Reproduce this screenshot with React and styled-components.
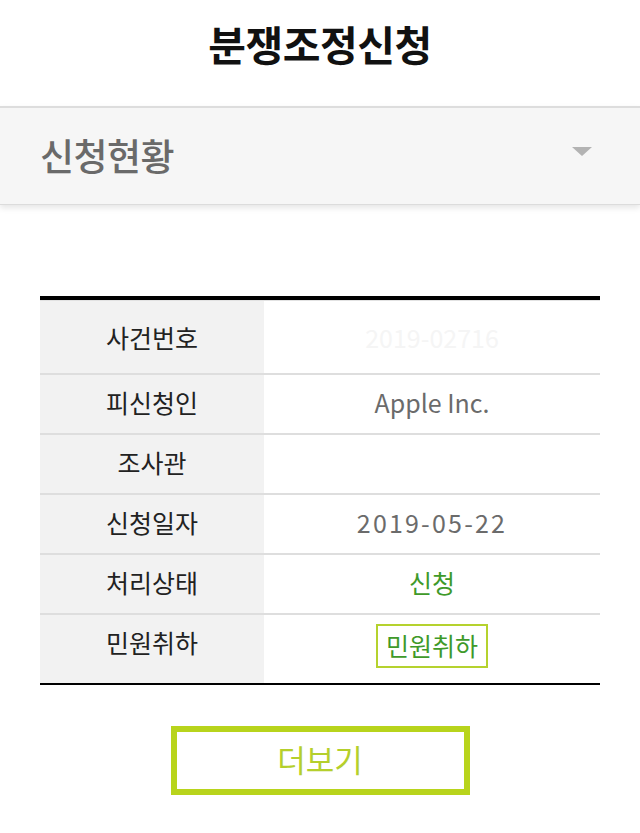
import React from "react";
import styled, { createGlobalStyle } from "styled-components";

const GlobalStyle = createGlobalStyle`
  html, body {
    margin: 0;
    padding: 0;
    background: #ffffff;
  }
  body {
    font-family: "Noto Sans CJK KR", "Noto Sans", sans-serif;
  }
`;

const Page = styled.div`
  width: 640px;
  min-height: 833px;
  background: #ffffff;
  display: flex;
  flex-direction: column;
`;

const Title = styled.h1`
  margin: 0;
  height: 106px;
  display: flex;
  align-items: center;
  justify-content: center;
  font-size: 41px;
  font-weight: 700;
  color: #111111;
  letter-spacing: -0.5px;
  padding-bottom: 20px;
  box-sizing: border-box;
`;

const StatusBar = styled.div`
  height: 99px;
  box-sizing: border-box;
  background: #f6f6f6;
  border-top: 2px solid #dddddd;
  border-bottom: 1px solid #dcdcdc;
  box-shadow: 0 3px 6px rgba(0, 0, 0, 0.1);
  display: flex;
  align-items: center;
  justify-content: space-between;
  padding: 0 48px 2px 40px;
`;

const StatusLabel = styled.span`
  font-size: 37px;
  font-weight: 500;
  color: #6a6a6a;
  letter-spacing: -0.5px;
`;

const Caret = styled.span`
  width: 0;
  height: 0;
  border-left: 10px solid transparent;
  border-right: 10px solid transparent;
  border-top: 9px solid #b3b3b3;
  margin-bottom: 8px;
`;

const Content = styled.div`
  padding: 91px 40px 0;
  display: flex;
  flex-direction: column;
  align-items: center;
`;

const Table = styled.div`
  width: 100%;
  border-top: 4px solid #000000;
  border-bottom: 2px solid #000000;
`;

const Row = styled.div`
  display: grid;
  grid-template-columns: 224px 1fr;
  height: ${(p) => p.$h}px;
  border-top: ${(p) => (p.$first ? "1px solid #e2e2e2" : "2px solid #dedede")};
  box-sizing: border-box;
`;

const Label = styled.div`
  background: #f2f2f2;
  display: flex;
  align-items: center;
  justify-content: center;
  font-size: 25px;
  color: #222222;
  padding-bottom: ${(p) => p.$pb || 0}px;
`;

const Value = styled.div`
  display: flex;
  align-items: center;
  justify-content: center;
  font-size: 25px;
  color: ${(p) => p.$color || "#6b6b6b"};
  letter-spacing: ${(p) => (p.$wide ? "2.2px" : "0")};
  padding-bottom: ${(p) => p.$pb || 0}px;
`;

const WithdrawButton = styled.span`
  border: 2px solid #b5d22e;
  color: #3f9a2a;
  font-size: 25px;
  padding: 1px 8px 3px;
  line-height: 36px;
`;

const MoreButton = styled.button`
  margin-top: 41px;
  width: 299px;
  height: 69px;
  box-sizing: border-box;
  border: 6px solid #b8d41c;
  background: #ffffff;
  color: #b5cf2c;
  font-family: "Noto Sans CJK KR", "Noto Sans", sans-serif;
  font-size: 31px;
  padding: 0 0 4px;
`;

const rows = [
  { label: "사건번호", value: "2019-02716", color: "#f5f5f5", h: 73, first: true, pb: 0 },
  { label: "피신청인", value: "Apple Inc.", h: 60, pb: 5 },
  { label: "조사관", value: "", h: 60, pb: 5 },
  { label: "신청일자", value: "2019-05-22", h: 60, pb: 5, wide: true },
  { label: "처리상태", value: "신청", color: "#3f9a2a", h: 60, pb: 5 },
];

export default function App() {
  return (
    <>
      <GlobalStyle />
      <Page>
        <Title>분쟁조정신청</Title>
        <StatusBar>
          <StatusLabel>신청현황</StatusLabel>
          <Caret />
        </StatusBar>
        <Content>
          <Table>
            {rows.map((r) => (
              <Row key={r.label} $h={r.h} $first={r.first}>
                <Label $pb={r.pb}>{r.label}</Label>
                <Value $color={r.color} $pb={r.pb} $wide={r.wide}>
                  {r.value}
                </Value>
              </Row>
            ))}
            <Row $h={70}>
              <Label $pb={14}>민원취하</Label>
              <Value $pb={6}>
                <WithdrawButton>민원취하</WithdrawButton>
              </Value>
            </Row>
          </Table>
          <MoreButton>더보기</MoreButton>
        </Content>
      </Page>
    </>
  );
}
